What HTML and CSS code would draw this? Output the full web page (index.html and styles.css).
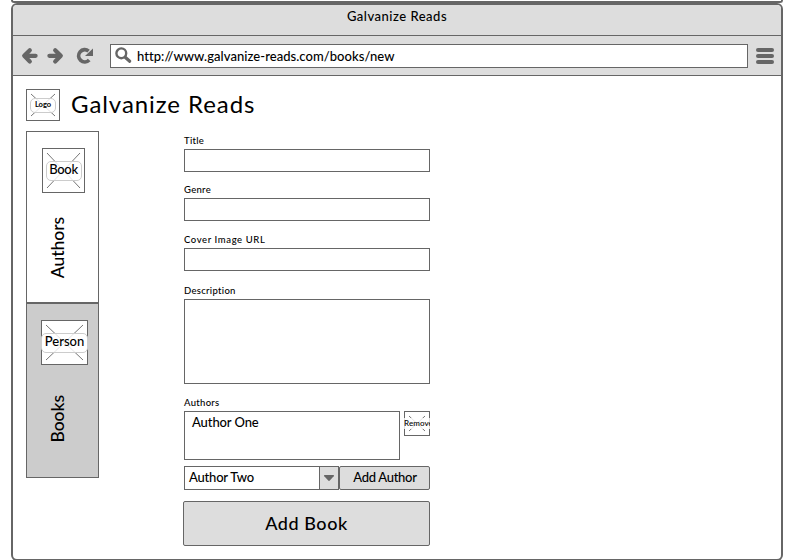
FILE: index.html
```html
<!DOCTYPE html>
<html lang="en">
<head>
<meta charset="utf-8">
<title>Galvanize Reads</title>
<link rel="stylesheet" href="styles.css">
</head>
<body>
<div class="frame-above"></div>
<div class="window">
  <header class="titlebar"><span>Galvanize Reads</span></header>
  <div class="toolbar">
    <svg class="nav" width="76" height="18" viewBox="0 0 76 18" fill="none" stroke="#666">
      <path d="M8.8 3.2 3.2 8.8l5.6 5.6M3.5 8.8H14.6" stroke-width="4.2" stroke-linecap="round" stroke-linejoin="round"/>
      <path d="M34.2 3.2 39.8 8.8l-5.6 5.6M39.5 8.8H28.4" stroke-width="4.2" stroke-linecap="round" stroke-linejoin="round"/>
      <path d="M68.2 13A6.1 6.1 0 1 1 67.6 4.1" stroke-width="3.8"/>
      <path d="M72 1.4V9h-8z" fill="#666" stroke="none"/>
    </svg>
    <div class="url">
      <svg width="17" height="17" viewBox="0 0 17 17" fill="none" stroke="#666">
        <circle cx="6.3" cy="6.3" r="4.9" stroke-width="2.4"/>
        <path d="m10.2 10.2 4.5 4" stroke-width="3.2" stroke-linecap="round"/>
      </svg>
      <span>http://www.galvanize-reads.com/books/new</span>
    </div>
    <div class="menu"><i></i><i></i><i></i></div>
  </div>
  <main>
    <div class="brand">
      <div class="image logo"><svg viewBox="0 0 32 30" width="32" height="30"><path d="m4 4 24 22M28 4 4 26"/></svg><span>Logo</span></div>
      <h1>Galvanize Reads</h1>
    </div>
    <div class="content">
      <nav class="tabs">
        <div class="tab"><div class="image book"><svg viewBox="0 0 41 43" width="41" height="43"><path d="m4 4 33 35M37 4 4 39"/></svg><span>Book</span></div><b class="authors">Authors</b></div>
        <div class="tab active"><div class="image person"><svg viewBox="0 0 45 43" width="45" height="43"><path d="m4 4 37 35M41 4 4 39"/></svg><span>Person</span></div><b class="books">Books</b></div>
      </nav>
      <form class="form">
        <label class="l-title">Title</label><div class="field"></div>
        <label class="l-genre">Genre</label><div class="field"></div>
        <label class="l-cover">Cover Image URL</label><div class="field"></div>
        <label class="l-desc">Description</label><div class="field area"></div>
        <label class="l-authors">Authors</label>
        <div class="row">
          <div class="list"><span>Author One</span></div>
          <div class="image remove"><svg viewBox="0 0 24 23" width="24" height="23"><path d="m4 4 16 15M20 4 4 19"/></svg><span>Remove</span></div>
        </div>
        <div class="row picker">
          <div class="select"><span>Author Two</span><div class="arrow"><svg width="10" height="6" viewBox="0 0 10 6"><path d="M.5 0h9q.9.3.2 1.2L5.8 5.6q-.8.6-1.6 0L.3 1.2Q-.4.3.5 0z" fill="#666"/></svg></div></div>
          <button type="button" class="add-author"><span>Add Author</span></button>
        </div>
        <button type="button" class="add-book"><span>Add Book</span></button>
      </form>
    </div>
  </main>
</div>
</body>
</html>
```
FILE: styles.css
```css
* { box-sizing: border-box; }
html, body { margin: 0; height: 560px; overflow: hidden; background: #fff; }
body { font-family: Lato, sans-serif; font-size: 13px; font-weight: 500; color: #000; }
span, h1, label, b { white-space: nowrap; }
.frame-above { width: 772px; height: 3px; margin-left: 11px; border: 2px solid #666; border-top: 0; border-radius: 0 0 5px 5px; }
.window { width: 772px; height: 558px; margin-left: 11px; border: 2px solid #666; border-radius: 6px; overflow: hidden; }
.titlebar { height: 31px; background: #ddd; border-bottom: 1px solid #666; display: flex; justify-content: center; padding-top: 3px; line-height: 16px; letter-spacing: .5px; }
.toolbar { height: 40px; background: #ddd; border-bottom: 1px solid #666; display: flex; align-items: center; padding: 0 7px 0 8px; }
.nav { margin-right: 13px; }
.url { width: 638px; height: 24px; background: #fff; border: 1px solid #666; display: flex; align-items: center; padding-left: 4px; gap: 5px; letter-spacing: .05px; }
.menu { display: flex; flex-direction: column; gap: 2px; margin-left: 8px; width: 18px; }
.menu i { height: 4px; border-radius: 2px; background: #666; }
main { padding: 13px 0 0 13px; }
.brand { display: flex; height: 42px; }
h1 { margin: 0 0 0 11px; font-size: 24px; font-weight: 400; line-height: 30px; letter-spacing: .93px; }
.image { display: grid; place-items: center; border: 1px solid #666; background: #fff; flex: none; }
.image > * { grid-area: 1 / 1; }
.image path { fill: none; stroke: #777; stroke-width: 1; }
.image span { background: rgba(255,255,255,.8); border: 1px solid #ccc; border-radius: 5px; text-align: center; }
.logo { width: 34px; height: 32px; }
.logo span { width: 26px; height: 15px; font-size: 7.5px; line-height: 12px; font-weight: 700; }
.content { display: flex; align-items: flex-start; }
.tabs { width: 73px; }
.tab { height: 172px; border: 1px solid #666; padding: 16px 0 0 15px; }
.active { height: 175px; background: #ccc; padding: 16px 0 0 14px; }
.book { width: 43px; height: 45px; }
.book span { width: 36px; height: 20px; line-height: 15px; letter-spacing: -.3px; }
.person { width: 47px; height: 45px; }
.person span { width: 47px; height: 20px; line-height: 15px; margin: 0 -1px; }
.tab b { display: block; writing-mode: vertical-rl; transform: rotate(180deg); font-size: 17.5px; font-weight: 500; line-height: 20px; width: 20px; letter-spacing: -.05px; }
.authors { margin: 24px 0 0 6px; }
.books { margin: 30px 0 0 7px; }
.form { margin-left: 85px; width: 246px; padding-top: 3px; }
label { display: block; height: 15px; font-size: 9.5px; line-height: 13px; letter-spacing: .3px; }
.l-cover { letter-spacing: .6px; }
.field { height: 23px; border: 1px solid #666; margin-bottom: 11px; }
.field + .l-cover { margin-top: 12px; }
.l-desc { margin-top: 13px; }
.area { height: 85px; margin-bottom: 12px; }
.row { display: flex; gap: 4px; }
.list { width: 216px; height: 49px; border: 1px solid #666; padding: 2px 0 0 7px; line-height: 16px; letter-spacing: -.1px; }
.remove { width: 26px; height: 25px; grid-template-columns: 24px; clip-path: inset(0); }
.remove span { width: 32px; border: 0; border-radius: 0; font-size: 8px; line-height: 10px; padding-bottom: 1px; justify-self: start; margin-left: -1px; text-align: left; letter-spacing: .1px; }
.picker { margin-top: 6px; gap: 0; }
.select { display: flex; width: 155px; height: 24px; border: 1px solid #666; justify-content: space-between; line-height: 20px; padding-left: 4px; letter-spacing: -.2px; }
.arrow { width: 19px; background: #ddd; border-left: 1px solid #666; display: grid; place-items: center; }
button { font: inherit; color: inherit; padding: 0 0 2px; border: 1px solid #666; border-radius: 2px; background: #ddd; }
.add-author { width: 91px; height: 24px; padding-left: 1px; letter-spacing: -.3px; }
.add-book { display: block; width: 247px; height: 45px; margin: 11px 0 0 -1px; font-size: 18px; letter-spacing: .55px; }
```
